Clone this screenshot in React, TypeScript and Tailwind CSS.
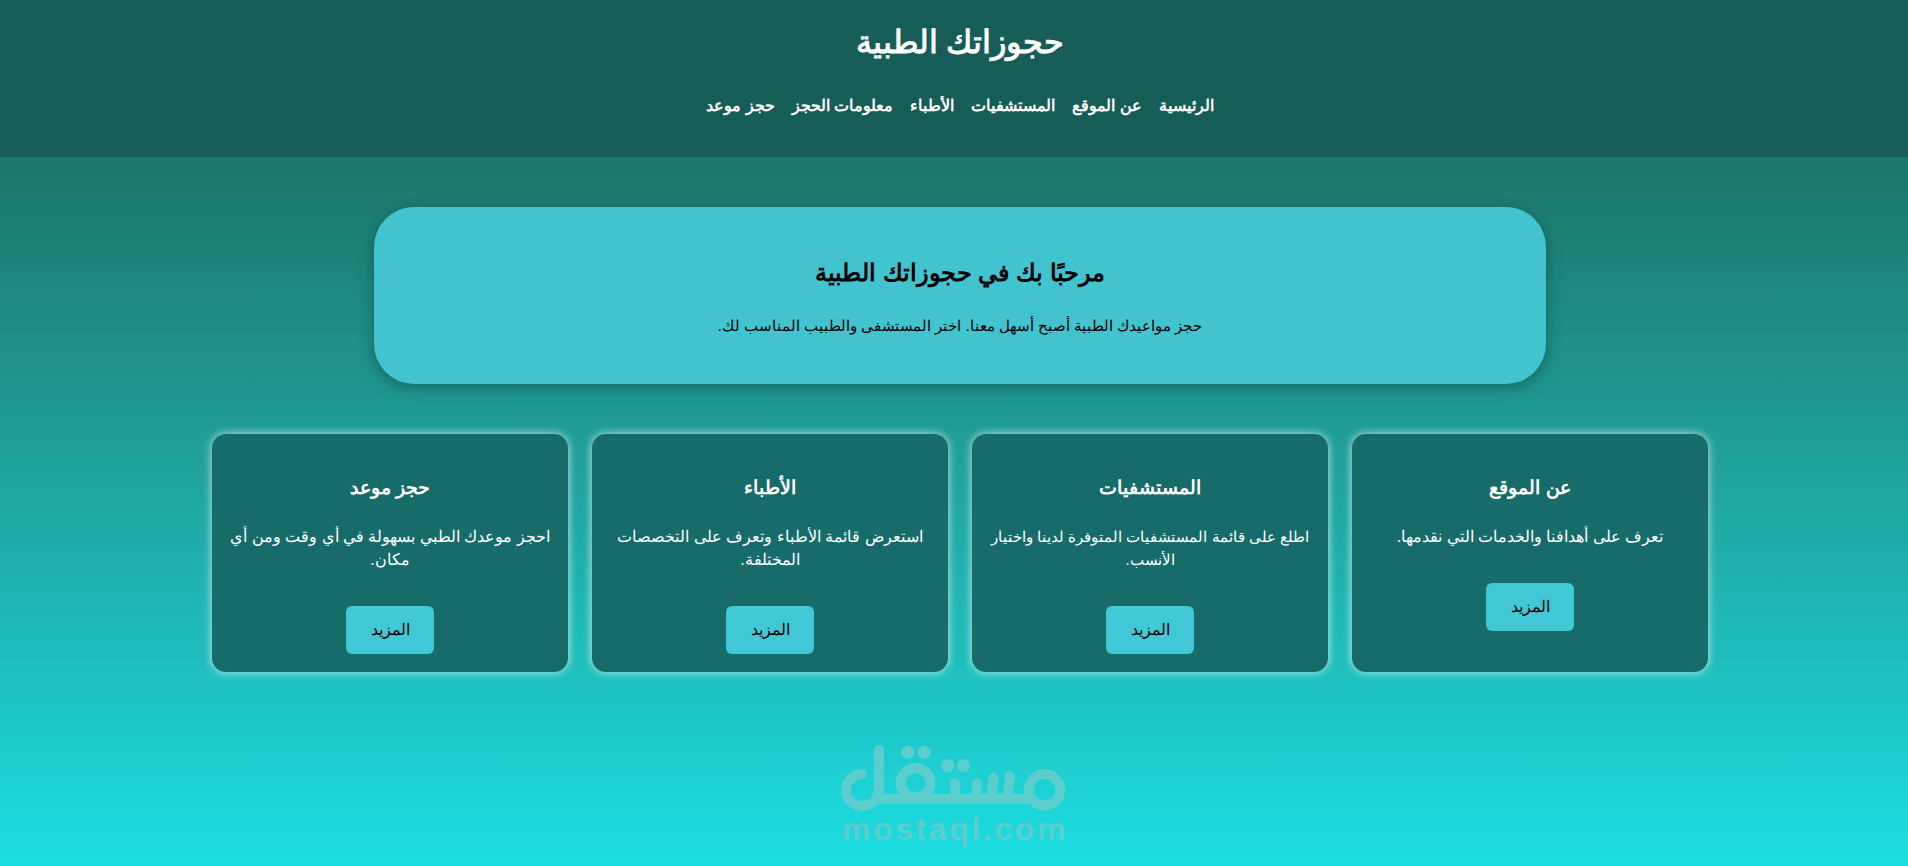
const cards = [
  { t: "عن الموقع", d: "تعرف على أهدافنا والخدمات التي نقدمها.", p: "text-[16px]" },
  { t: "المستشفيات", d: "اطلع على قائمة المستشفيات المتوفرة لدينا واختيار الأنسب.", p: "text-[15px]" },
  { t: "الأطباء", d: "استعرض قائمة الأطباء وتعرف على التخصصات المختلفة.", p: "text-[16px]" },
  { t: "حجز موعد", d: "احجز موعدك الطبي بسهولة في أي وقت ومن أي مكان.", p: "text-[16px]" },
];
const nav = ["الرئيسية", "عن الموقع", "المستشفيات", "الأطباء", "معلومات الحجز", "حجز موعد"];

function MostaqlLogo() {
  return (
    <svg viewBox="835 735 240 80" width="240" height="80" fill="none" stroke="#5ccece" strokeWidth="10" strokeLinecap="round" aria-label="mostaql logo">
      <path d="M862 774A16 16 0 0 0 862 806A17 16 0 0 0 879 790V750" />
      <path d="M872 799H1030" strokeLinecap="butt" />
      <circle cx="915.7" cy="782.7" r="14.8" />
      <circle cx="1044.5" cy="789.8" r="15.7" />
      <path d="M955 783V799M977 783L976 799M993.5 778L991 799M1010 776L1007 799" />
      <g fill="#5ccece" stroke="none">
        <circle cx="907.7" cy="752.3" r="6.6" />
        <circle cx="924" cy="752.3" r="6.6" />
        <circle cx="947.7" cy="765.7" r="6.6" />
        <circle cx="963.3" cy="765.7" r="6.6" />
      </g>
    </svg>
  );
}

export default function App() {
  return (
    <div dir="rtl" className="relative flex h-[866px] flex-col overflow-hidden font-['Liberation_Sans',Arial,sans-serif] text-[16px]">
      <header className="h-[157px] shrink-0 bg-[#165d58] pt-[22px] pl-[12px] text-center text-white">
        <h1 className="text-[32px] leading-[40px] font-bold">حجوزاتك الطبية</h1>
        <nav className="mt-[35px] flex justify-center gap-[17px] font-bold leading-[18px]">
          {nav.map((n) => <span key={n}>{n}</span>)}
        </nav>
      </header>
      <main className="flex flex-1 flex-col items-center bg-gradient-to-b from-[#1c7569] to-[#1cdee2] pt-[50px] pl-[12px]">
        <section className="h-[177px] w-[1172px] rounded-[40px] bg-[#42c3d0] pt-[51px] text-center text-black shadow-[0_4px_15px_rgba(0,0,0,0.3)]">
          <h2 className="text-[24px] leading-[30px] font-bold">مرحبًا بك في حجوزاتك الطبية</h2>
          <p className="mt-[29px] text-[15px] leading-[18px]">حجز مواعيدك الطبية أصبح أسهل معنا. اختر المستشفى والطبيب المناسب لك.</p>
        </section>
        <div className="mt-[50px] flex gap-[24px]">
          {cards.map((c) => (
            <article key={c.t} className="flex h-[238px] w-[356px] flex-col items-center rounded-[14px] bg-[#176c69] px-[8px] pt-[43px] text-center text-white shadow-[0_0_10px_rgba(255,255,255,0.75)]">
              <h3 className="text-[19px] leading-[22px] font-bold">{c.t}</h3>
              <p className={`mt-[26px] leading-[23px] ${c.p}`}>{c.d}</p>
              <button className="mt-[35px] h-[48px] w-[88px] rounded-[6px] bg-[#41c8d6] text-black">المزيد</button>
            </article>
          ))}
        </div>
      </main>
      <div dir="ltr" className="absolute top-[735px] left-[835px] flex w-[240px] flex-col">
        <MostaqlLogo />
        <div className="mt-[-2px] pl-[7px] text-[32px] leading-[32px] font-bold tracking-[2.6px] whitespace-nowrap text-[#5ccece]">mostaql.com</div>
      </div>
    </div>
  );
}
